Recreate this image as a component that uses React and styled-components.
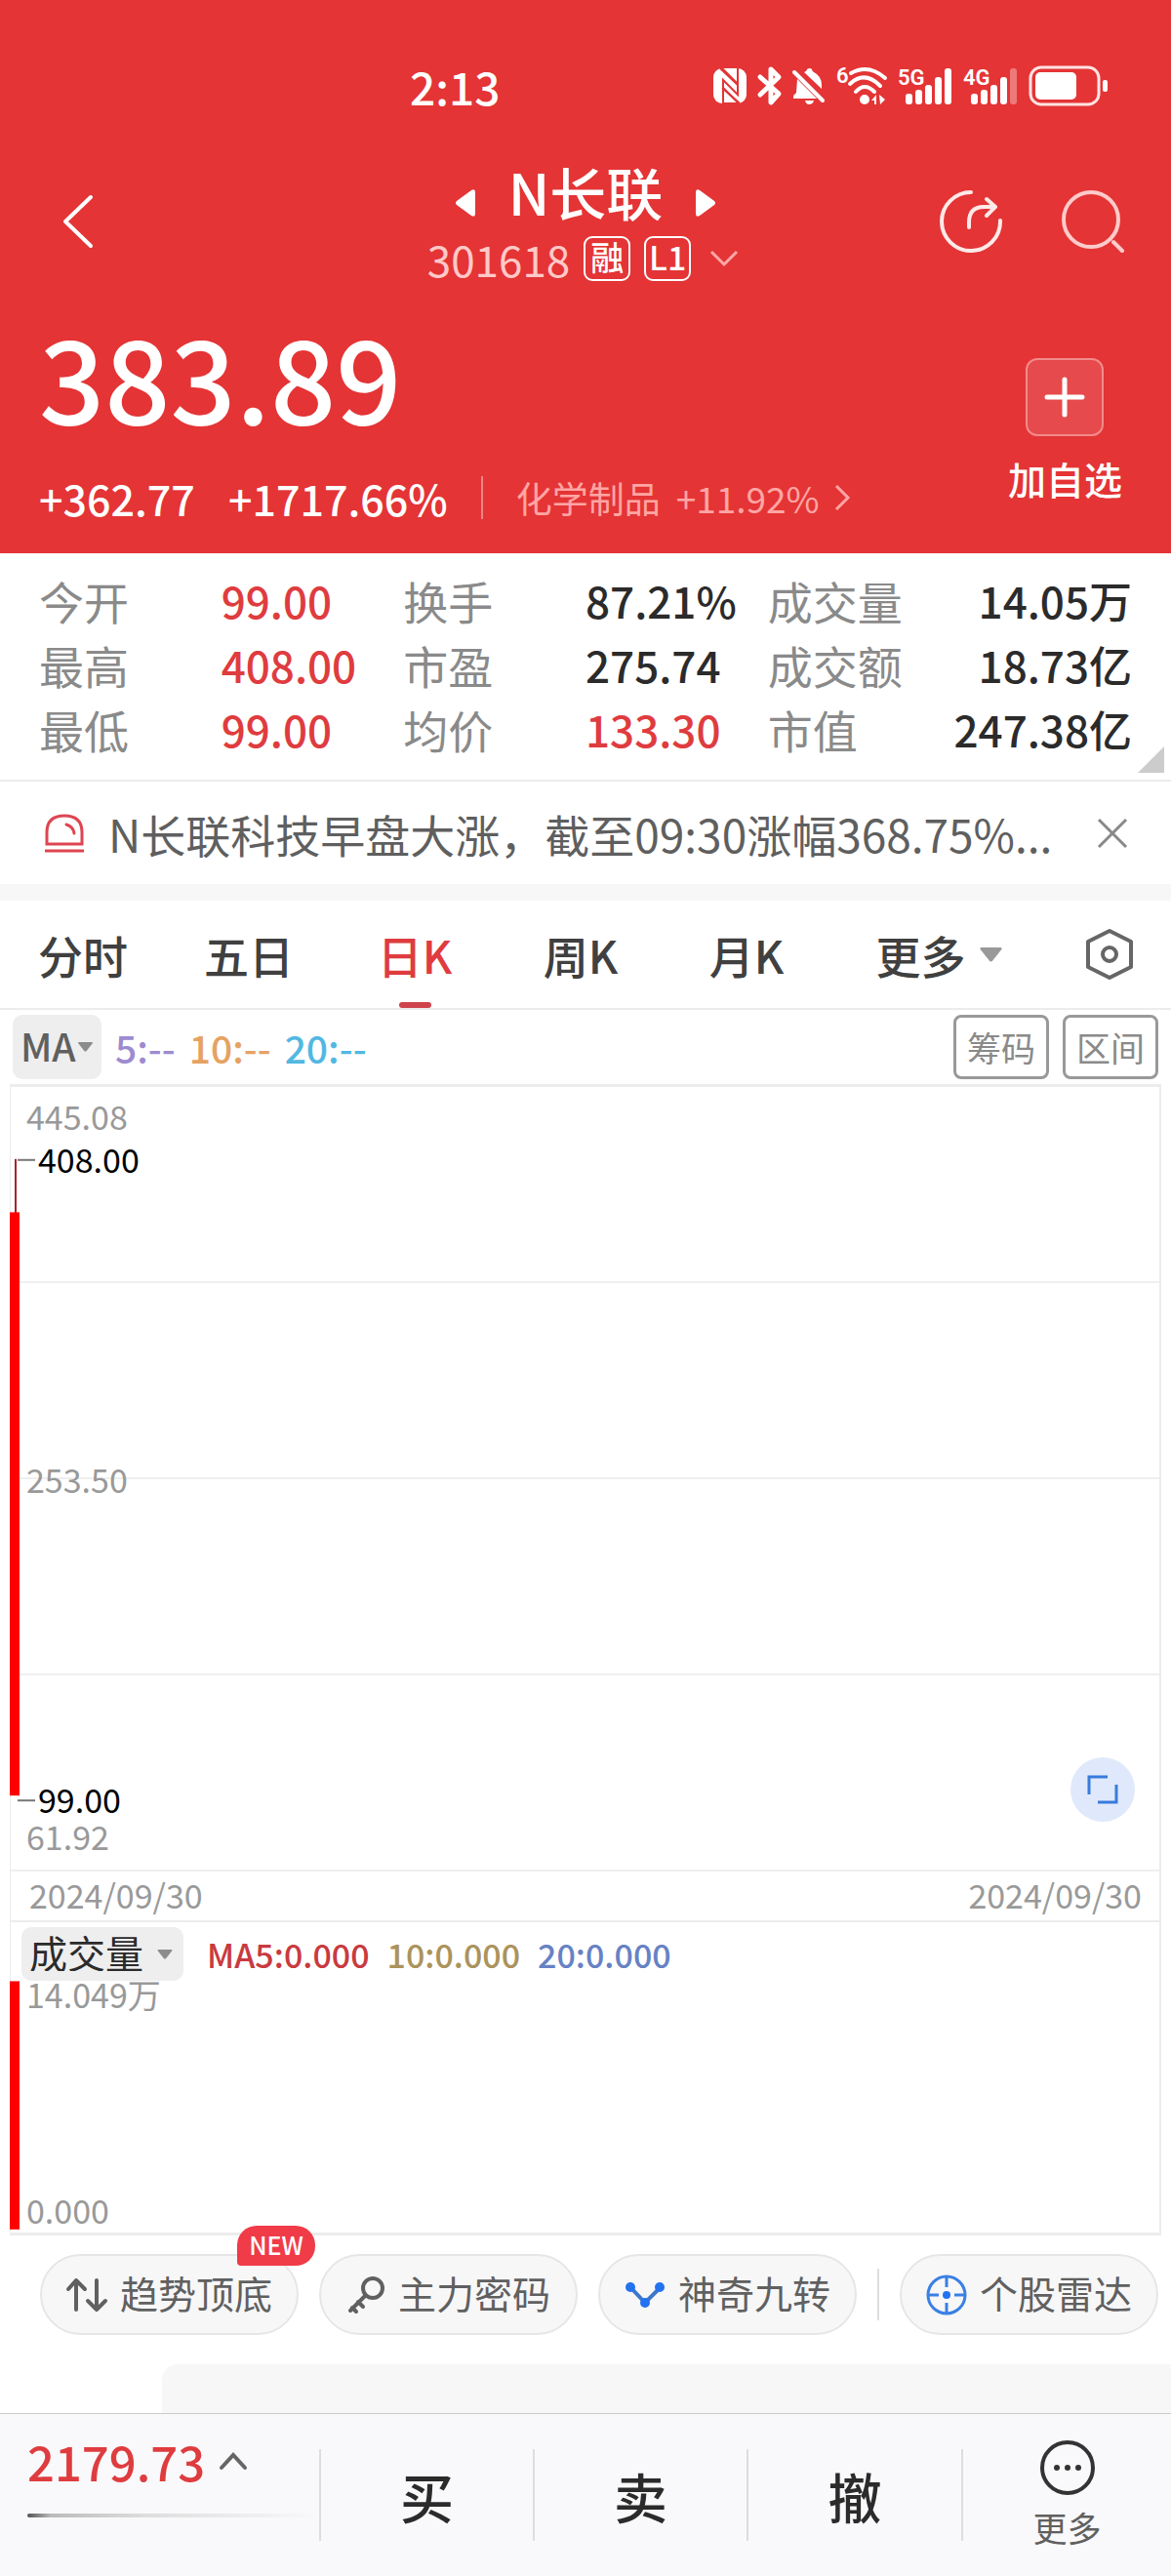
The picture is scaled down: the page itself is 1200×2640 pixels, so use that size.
import { useState } from 'react'
import styled, { createGlobalStyle } from 'styled-components'

const colors = {
  brand: '#e43435',
  rise: '#df3c3f',
  text: '#2b2b2b',
  muted: '#8a8a8a',
  axis: '#999',
  line: '#ececec',
  panel: '#f7f7f8',
}

const sizes = {
  price: '118px',
  title: '58px',
  action: '55px',
  total: '49px',
  body: '46px',
  figure: '44px',
  label: '39px',
  sector: '37px',
  small: '35px',
  chart: '34px',
  tiny: '25px',
}

const GlobalStyle = createGlobalStyle`
  * {
    box-sizing: border-box;
  }

  body {
    margin: 0;
    background: #fff;
    color: ${colors.text};
    font-family: 'Noto Sans CJK SC', 'Noto Sans', sans-serif;
    font-weight: 400;
  }

  button,
  select {
    margin: 0;
    padding: 0;
    border: 0;
    background: none;
    color: inherit;
    font: inherit;
    cursor: pointer;
  }

  svg {
    display: block;
    flex: none;
    overflow: visible;
  }
`

const Page = styled.div`
  min-height: 100vh;
  display: flex;
  flex-direction: column;
`

/* Header */

const Header = styled.header`
  background: ${colors.brand};
  color: #fff;
`

const StatusBar = styled.div`
  display: flex;
  align-items: center;
  justify-content: space-between;
  padding: 56px 65px 0 35%;
`

const Clock = styled.time`
  font-size: ${sizes.body};
  font-weight: 500;
  line-height: 64px;
`

const StatusIcons = styled.div`
  display: flex;
  align-items: center;
  gap: 11px;

  text {
    font-family: Roboto, sans-serif;
    font-weight: 600;
    font-size: 22px;
  }
`

const TitleBar = styled.div`
  display: grid;
  grid-template-columns: 1fr auto 1fr;
  align-items: center;
  padding: 40px 48px 0;
`

const TitleSide = styled.div`
  display: flex;
  justify-content: ${props => (props.$end ? 'flex-end' : 'flex-start')};
  gap: 61px;
  padding-left: 16px;
`

const TitleBlock = styled.div`
  display: flex;
  flex-direction: column;
  align-items: center;
  gap: 10px;
  padding: 0 0 6px;
`

const TitleRow = styled.div`
  display: flex;
  align-items: center;
  gap: 34px;
`

const StepButton = styled.button`
  padding-top: 24px;
`

const Title = styled.h1`
  margin: 0;
  font-size: ${sizes.title};
  font-weight: 500;
  line-height: 72px;
`

const CodeRow = styled.div`
  display: flex;
  align-items: center;
  gap: 14px;
  height: 46px;
`

const Code = styled.span`
  color: #ffc9c8;
  font-size: ${sizes.figure};
  line-height: 40px;
`

const Badge = styled.span`
  width: 48px;
  height: 46px;
  border: 2px solid #fff;
  border-radius: 9px;
  font-size: ${sizes.chart};
  font-weight: 500;
  line-height: 38px;
  text-align: center;
`

const Quote = styled.section`
  display: flex;
  justify-content: space-between;
  align-items: flex-start;
  padding: 30px 50px 27px 40px;
`

const Price = styled.div`
  font-size: ${sizes.price};
  font-weight: 500;
  line-height: 120px;
`

const ChangeRow = styled.div`
  display: flex;
  align-items: center;
  gap: 34px;
  margin-top: 36px;
  font-size: 43px;
  font-weight: 500;
  line-height: 60px;
`

const Divider = styled.span`
  width: 2px;
  height: ${props => props.$height};
  background: ${props => props.color};
`

const Sector = styled.a`
  display: flex;
  align-items: center;
  gap: 16px;
  color: #ffa5a4;
  font-size: ${sizes.sector};
  font-weight: 400;
  text-decoration: none;
`

const AddButton = styled.button`
  display: flex;
  flex-direction: column;
  align-items: center;
  gap: 19px;
  margin-top: 43px;
  font-size: ${sizes.label};
  font-weight: 500;
  line-height: 48px;
`

const AddIcon = styled.span`
  display: grid;
  place-items: center;
  width: 80px;
  height: 80px;
  border: 2px solid #f28b8b;
  border-radius: 12px;
  background: #e64a4c;
`

/* Figures */

const Stats = styled.dl`
  position: relative;
  display: grid;
  grid-template-columns: repeat(3, 1fr);
  margin: 0;
  padding: 15px 40px 19px;
  border-bottom: 2px solid ${colors.line};
  line-height: 66px;
`

const Stat = styled.div`
  display: flex;
`

const StatName = styled.dt`
  flex: ${props => (props.$wide ? '0 0 auto' : '0 0 50%')};
  color: ${colors.muted};
  font-size: ${sizes.body};
`

const StatValue = styled.dd`
  flex: 1;
  margin: 0;
  color: ${props => (props.$rise ? colors.rise : colors.text)};
  font-size: ${sizes.figure};
  font-weight: 500;
  text-align: ${props => (props.$wide ? 'right' : 'left')};
  white-space: nowrap;
`

const Corner = styled.span`
  position: absolute;
  right: 7px;
  bottom: 7px;
  border-left: 27px solid transparent;
  border-bottom: 27px solid #ccc;
`

const Notice = styled.div`
  display: flex;
  align-items: center;
  padding: 0 44px 0 45px;
  height: 105px;
`

const NoticeText = styled.p`
  flex: 1;
  margin: 0 40px 0 24px;
  overflow: hidden;
  color: #5f5f5f;
  font-size: ${sizes.body};
  line-height: 66px;
  text-overflow: ellipsis;
  white-space: nowrap;
`

const Band = styled.div`
  height: 17px;
  background: ${colors.panel};
`

/* Chart */

const Tabs = styled.div`
  display: grid;
  grid-template-columns: repeat(5, 170fr) 224fr 126fr;
  height: 112px;
  border-bottom: 2px solid ${colors.line};
`

const Tab = styled.button`
  display: flex;
  align-items: center;
  justify-content: center;
  gap: 14px;
  position: relative;
  color: ${props => (props.$active ? colors.rise : '#404040')};
  font-size: ${sizes.body};
  font-weight: 500;

  &::after {
    content: '';
    display: ${props => (props.$active ? 'block' : 'none')};
    position: absolute;
    bottom: 0;
    width: 33px;
    height: 6px;
    border-radius: 3px;
    background: #cf444c;
  }
`

const Toolbar = styled.div`
  display: flex;
  align-items: center;
  gap: 14px;
  padding: 5px 13px;
`

const Picker = styled.label`
  position: relative;
  display: flex;
  align-items: center;

  svg {
    position: absolute;
    right: ${props => (props.$large ? '11px' : '9px')};
    pointer-events: none;
  }

  select {
    appearance: none;
    height: ${props => (props.$large ? '55px' : '66px')};
    padding: ${props => (props.$large ? '0 40px 4px 8px' : '0 26px 3px 8px')};
    border-radius: 10px;
    background: #eee;
    color: ${props => (props.$large ? colors.text : '#606060')};
    font-size: ${sizes.label};
    font-weight: ${props => (props.$large ? 400 : 500)};
    line-height: 1;
  }
`

const Averages = styled.div`
  display: flex;
  flex: 1;
  gap: ${props => props.$gap};
  font-size: ${props => props.$size};
  font-weight: 500;
  line-height: 50px;
`

const Average = styled.span`
  color: ${props => props.color};
`

const ToolButton = styled.button`
  width: 98px;
  height: 66px;
  border: 3px solid #999;
  border-radius: 8px;
  color: ${colors.muted};
  font-size: ${sizes.small};
  line-height: 56px;
`

const ChartFrame = styled.section`
  margin: 0 10px;
  border: 1px solid ${colors.line};
  border-width: 3px 2px 3px 1px;
  color: ${colors.axis};
`

const Plot = styled.div`
  position: relative;
  display: grid;
  grid-template-rows: repeat(4, 1fr);
  height: 804px;
`

const GridBand = styled.div`
  border-bottom: 2px solid #efefef;
`

const AxisLabel = styled.span`
  position: absolute;
  left: ${props => (props.$mark ? '28px' : '16px')};
  color: ${props => (props.$mark ? '#000' : 'inherit')};
  font-size: ${sizes.chart};
  line-height: 36px;
  transform: translateY(-50%);
`

const Candle = styled.svg`
  position: absolute;
  left: -1px;
  top: 0;
  width: 28px;
  height: 100%;
`

const ExpandButton = styled.button`
  position: absolute;
  right: 25px;
  bottom: 51px;
  display: grid;
  place-items: center;
  width: 66px;
  height: 66px;
  border-radius: 50%;
  background: #dfe9fb;
`

const DateRow = styled.div`
  display: flex;
  justify-content: space-between;
  padding: 0 18px 2px 19px;
  border-bottom: 2px solid ${colors.line};
  font-size: ${sizes.chart};
  line-height: 48px;
`

const Volume = styled.div`
  position: relative;
  height: 318px;
  padding: 5px 11px;
`

const VolumeHead = styled.div`
  display: flex;
  align-items: center;
  gap: 24px;
`

/* Shortcuts */

const Chips = styled.nav`
  display: flex;
  align-items: center;
  justify-content: space-between;
  padding: 19px 13px 30px 41px;
`

const Chip = styled.button`
  position: relative;
  display: flex;
  align-items: center;
  justify-content: center;
  gap: 13px;
  width: 265px;
  height: 83px;
  border: 2px solid #e6e6e6;
  border-radius: 42px;
  background: ${colors.panel};
  color: #606060;
  font-size: ${sizes.label};
  line-height: 1;
`

const ChipText = styled.span`
  padding-bottom: 5px;
`

const NewTag = styled.span`
  position: absolute;
  top: -31px;
  right: -19px;
  width: 80px;
  height: 41px;
  border-radius: 20px 20px 20px 4px;
  background: #f03b48;
  color: #fff;
  font-size: ${sizes.tiny};
  font-weight: 500;
  line-height: 38px;
  text-align: center;
`

const NextPanel = styled.div`
  flex: 1;
  min-height: 50px;
  margin-left: 166px;
  border-radius: 16px 0 0 0;
  background: ${colors.panel};
`

/* Trade bar */

const TradeBar = styled.footer`
  display: grid;
  grid-template-columns: 327fr 219fr 219fr 220fr 215fr;
  align-items: center;
  height: 167px;
  border-top: 1px solid #ccc;
  background: #f9f9fb;
`

const Total = styled.button`
  display: flex;
  flex-direction: column;
  align-self: start;
  gap: 24px;
  padding: 18px 0 0 28px;
`

const TotalValue = styled.span`
  display: flex;
  align-items: center;
  gap: 15px;
  color: ${colors.rise};
  font-size: ${sizes.total};
  font-weight: 500;
  line-height: 60px;
`

const TotalTrack = styled.span`
  width: 100%;
  height: 4px;
  border-radius: 2px;
  background: linear-gradient(90deg, #555, #bbb 8%, #ddd 40%, #f9f9fb);
`

const Action = styled.button`
  height: 94px;
  border-left: 2px solid #ddd;
  font-size: ${sizes.action};
  font-weight: 500;
  line-height: 86px;
`

const MoreAction = styled.button`
  display: flex;
  flex-direction: column;
  align-items: center;
  justify-content: center;
  gap: 10px;
  height: 94px;
  border-left: 2px solid #ddd;
  color: #606060;
  font-size: ${sizes.small};
  line-height: 46px;
`

const Caret = ({ width = 15, height = 10, color = '#8c8c8c' }) => (
  <svg width={width} height={height} viewBox="0 0 15 10">
    <path d="M0 1Q0 0 1 0H14Q15 0 15 1L8.500 9.200Q7.500 10 6.500 9.200Z" fill={color} />
  </svg>
)

const Signal = ({ label, bars }) => (
  <svg width="56" height="40" viewBox="0 0 56 40" fill="#fff">
    <text x="0" y="19">{label}</text>
    {[28, 24, 19, 11, 2].map((top, i) => (
      <rect
        key={top}
        x={8 + i * 10}
        y={top}
        width="7"
        height={39 - top}
        rx="3"
        opacity={i < bars ? 1 : 0.35}
      />
    ))}
  </svg>
)

const Status = () => (
  <StatusIcons>
    <svg width="36" height="38" viewBox="0 0 36 38">
      <rect x="1" y="1" width="34" height="36" rx="9" fill="#fff" />
      <path d="M8 1L26 18V28L11 13V37M28 37L10 21M26 1V15" fill="none" stroke={colors.brand} strokeWidth="2" />
      <path d="M10 1L26 17V1M11 21V37H27Z" fill="none" stroke={colors.brand} strokeWidth="2" />
    </svg>
    <svg width="24" height="38" viewBox="0 0 24 38" fill="none" stroke="#fff" strokeWidth="5" strokeLinecap="round" strokeLinejoin="round">
      <path d="M2 10L21 27L13 36V2L21 10L2 28" />
    </svg>
    <svg width="34" height="38" viewBox="0 0 34 38" fill="#fff">
      <path d="M5 12L25 32H1V29L4 26Z" />
      <path d="M12 5Q15 4 15 2Q18 0 20 2Q20 4 22 5Q30 9 30 18V22Z" />
      <path d="M13 34H22Q21 38 17 38Q14 38 13 34Z" />
      <path d="M2 5L31 34" stroke="#fff" strokeWidth="4" strokeLinecap="round" />
    </svg>
    <svg width="52" height="40" viewBox="0 0 52 40" fill="#fff">
      <text x="0" y="17">6</text>
      <g fill="none" stroke="#fff" strokeWidth="4" strokeLinecap="round">
        <path d="M15 7Q33-3 50 12" />
        <path d="M14 18Q29 4 45 20" />
        <path d="M20 26Q29 16 39 26" />
      </g>
      <circle cx="29" cy="34" r="5" />
      <path d="M36 35L41 29V39H39V35ZM44 29L50 34L45 39Z" />
    </svg>
    <Signal label="5G" bars={5} />
    <Signal label="4G" bars={4} />
    <svg width="81" height="42" viewBox="0 0 81 42" fill="#fff">
      <rect x="2" y="2" width="70" height="38" rx="11" fill="none" stroke="#ffe3e3" strokeWidth="3" />
      <rect x="7" y="7" width="42" height="28" rx="5" />
      <rect x="76" y="15" width="5" height="12" rx="2" />
    </svg>
  </StatusIcons>
)

const TrendIcon = () => (
  <svg width="42" height="34" viewBox="0 0 42 34" fill="none" stroke="#606060" strokeWidth="4" strokeLinecap="round" strokeLinejoin="round">
    <path d="M10 32V2M2 11L10 2L19 11M31 2V32M22 23L31 32L40 23" />
  </svg>
)

const KeyIcon = () => (
  <svg width="40" height="40" viewBox="0 0 40 40" fill="none" stroke="#606060" strokeWidth="4" strokeLinecap="round">
    <circle cx="27" cy="13" r="10" />
    <path d="M19 21L4 36M6 33L10 37M12 27L17 32" />
  </svg>
)

const TurnIcon = () => (
  <svg width="42" height="30" viewBox="0 0 42 30" fill="#2372f0">
    <path d="M6 7L21 23L37 7" fill="none" stroke="#3d78c8" strokeWidth="4" />
    <circle cx="6" cy="7" r="5" />
    <circle cx="21" cy="23" r="5" />
    <circle cx="36" cy="7" r="5" />
  </svg>
)

const RadarIcon = () => (
  <svg width="42" height="42" viewBox="0 0 42 42" fill="none" stroke="#3a80e4" strokeWidth="3">
    <circle cx="21" cy="21" r="19" />
    <path d="M21 2V13M21 29V40M2 21H13M29 21H40" />
    <circle cx="21" cy="21" r="4" fill="#2372f0" stroke="none" />
  </svg>
)

const stats = [
  { name: '今开', value: '99.00', rise: true },
  { name: '换手', value: '87.21%' },
  { name: '成交量', value: '14.05万' },
  { name: '最高', value: '408.00', rise: true },
  { name: '市盈', value: '275.74' },
  { name: '成交额', value: '18.73亿' },
  { name: '最低', value: '99.00', rise: true },
  { name: '均价', value: '133.30', rise: true },
  { name: '市值', value: '247.38亿' },
]

const periods = ['分时', '五日', '日K', '周K', '月K']

const axis = { max: 445.08, mid: 253.5, min: 61.92 }
const day = { high: 408, close: 383.89, low: 99 }

const percent = value => ((axis.max - value) / (axis.max - axis.min)) * 100

function PriceChart() {
  const top = percent(day.close)
  const bottom = percent(day.low)
  // the high and low marks sit just outside the candle
  const highMark = `${percent(day.high) - 0.5}%`
  const lowMark = `${bottom + 0.5}%`

  return (
    <Plot>
      <GridBand />
      <GridBand />
      <GridBand />
      <GridBand />
      <AxisLabel style={{ top: 30 }}>{axis.max}</AxisLabel>
      <AxisLabel style={{ top: '50%' }}>{axis.mid.toFixed(2)}</AxisLabel>
      <AxisLabel style={{ top: 'calc(100% - 36px)' }}>{axis.min}</AxisLabel>
      <AxisLabel $mark style={{ top: highMark }}>
        {day.high.toFixed(2)}
      </AxisLabel>
      <AxisLabel $mark style={{ top: lowMark }}>
        {day.low.toFixed(2)}
      </AxisLabel>
      <Candle>
        <rect x="5" y={highMark} width="2" height="10%" fill="#a8232b" />
        <rect x="0" y={`${top}%`} width="10" height={`${bottom - top}%`} fill="#f00" />
        <rect x="8" y={highMark} width="18" height="2" fill="#777" />
        <rect x="8" y={lowMark} width="18" height="2" fill="#777" />
      </Candle>
      <ExpandButton aria-label="全屏">
        <svg width="32" height="32" viewBox="0 0 32 32" fill="none" stroke="#3a7bdc" strokeWidth="3">
          <path d="M2 21V3H21M11 29H30V11" />
        </svg>
      </ExpandButton>
    </Plot>
  )
}

function VolumeChart() {
  return (
    <Volume>
      <VolumeHead>
        <Picker $large>
          <select aria-label="副图指标">
            <option>成交量</option>
          </select>
          <Caret width={16} />
        </Picker>
        <Averages $size={sizes.chart} $gap="18px">
          <Average color="#c93a40">MA5:0.000</Average>
          <Average color="#ab935c">10:0.000</Average>
          <Average color="#6782c4">20:0.000</Average>
        </Averages>
      </VolumeHead>
      <AxisLabel style={{ top: 74 }}>14.049万</AxisLabel>
      <AxisLabel style={{ top: 'calc(100% - 23px)' }}>0.000</AxisLabel>
      <Candle>
        <rect x="0" y="19%" width="10" height="80%" fill="#f00" />
      </Candle>
    </Volume>
  )
}

export default function App() {
  const [period, setPeriod] = useState('日K')

  return (
    <Page>
      <GlobalStyle />

      <Header>
        <StatusBar>
          <Clock>2:13</Clock>
          <Status />
        </StatusBar>

        <TitleBar>
          <TitleSide>
            <button aria-label="返回">
              <svg width="32" height="54" viewBox="0 0 32 54" fill="none" stroke="#fff" strokeWidth="4" strokeLinecap="round" strokeLinejoin="round">
                <path d="M29 2L3 27L29 52" />
              </svg>
            </button>
          </TitleSide>
          <TitleBlock>
            <TitleRow>
              <StepButton aria-label="上一只">
                <svg width="20" height="28" viewBox="0 0 20 28" fill="#fff">
                  <path d="M1 12L16 1Q20-1 20 3V25Q20 29 16 27L1 16Q-1 14 1 12Z" />
                </svg>
              </StepButton>
              <Title>N长联</Title>
              <StepButton aria-label="下一只">
                <svg width="20" height="28" viewBox="0 0 20 28" fill="#fff">
                  <path d="M19 12L4 1Q0-1 0 3V25Q0 29 4 27L19 16Q21 14 19 12Z" />
                </svg>
              </StepButton>
            </TitleRow>
            <CodeRow>
              <Code>301618</Code>
              <Badge>融</Badge>
              <Badge>L1</Badge>
              <button aria-label="展开">
                <svg width="40" height="18" viewBox="0 0 40 18" fill="none" stroke="#ffa9a8" strokeWidth="3">
                  <path d="M7 2L20 15L33 2" />
                </svg>
              </button>
            </CodeRow>
          </TitleBlock>
          <TitleSide $end>
            <button aria-label="分享">
              <svg width="64" height="66" viewBox="0 0 64 66" fill="none" stroke="#ffe9e9" strokeWidth="4" strokeLinecap="round" strokeLinejoin="round">
                <path d="M32 3A30 30 0 1 0 62 32" />
                <path d="M30 39V34Q30 18 45 18H57M48 10L57 18L48 27" />
              </svg>
            </button>
            <button aria-label="搜索">
              <svg width="64" height="66" viewBox="0 0 64 66" fill="none" stroke="#ffcaca" strokeWidth="4" strokeLinecap="round">
                <circle cx="30" cy="31" r="28" />
                <path d="M53 54L62 63" />
              </svg>
            </button>
          </TitleSide>
        </TitleBar>

        <Quote>
          <div>
            <Price>383.89</Price>
            <ChangeRow>
              <span>+362.77</span>
              <span>+1717.66%</span>
              <Divider $height="44px" color="#f08585" />
              <Sector href="#sector">
                <span>化学制品</span>
                <span>+11.92%</span>
                <svg width="15" height="28" viewBox="0 0 15 28" fill="none" stroke="#ffa5a4" strokeWidth="3">
                  <path d="M1 2L13 14L1 26" />
                </svg>
              </Sector>
            </ChangeRow>
          </div>
          <AddButton>
            <AddIcon>
              <svg width="40" height="40" viewBox="0 0 40 40" stroke="#fff" strokeWidth="5" strokeLinecap="round">
                <path d="M20 2V38M2 20H38" />
              </svg>
            </AddIcon>
            加自选
          </AddButton>
        </Quote>
      </Header>

      <Stats>
        {stats.map(({ name, value, rise }, i) => (
          <Stat key={name}>
            <StatName $wide={i % 3 === 2}>{name}</StatName>
            <StatValue $wide={i % 3 === 2} $rise={rise}>
              {value}
            </StatValue>
          </Stat>
        ))}
        <Corner />
      </Stats>

      <Notice>
        <svg width="42" height="40" viewBox="0 0 42 40" fill="none" stroke="#dd4650" strokeWidth="3">
          <path d="M3 31V19Q3 2 21 2Q39 2 39 19V31Z" />
          <path d="M23 11Q30 13 31 20" strokeLinecap="round" />
          <path d="M1 38H41" />
        </svg>
        <NoticeText>N长联科技早盘大涨，截至09:30涨幅368.75%...</NoticeText>
        <button aria-label="关闭">
          <svg width="32" height="32" viewBox="0 0 32 32" stroke="#888" strokeWidth="3">
            <path d="M2 2L30 30M30 2L2 30" />
          </svg>
        </button>
      </Notice>
      <Band />

      <Tabs>
        {periods.map(name => (
          <Tab key={name} $active={name === period} onClick={() => setPeriod(name)}>
            {name}
          </Tab>
        ))}
        <Tab>
          更多
          <Caret width={23} height={15} color="#999" />
        </Tab>
        <Tab aria-label="设置">
          <svg width="52" height="54" viewBox="0 0 52 54" fill="none" stroke="#666" strokeWidth="4" strokeLinejoin="round">
            <path d="M26 3L48 14V40L26 51L4 40V14Z" />
            <circle cx="26" cy="27" r="7" />
          </svg>
        </Tab>
      </Tabs>

      <Toolbar>
        <Picker>
          <select aria-label="主图指标">
            <option>MA</option>
          </select>
          <Caret />
        </Picker>
        <Averages $size={sizes.label} $gap="14px">
          <Average color="#9d8bd0">5:--</Average>
          <Average color="#e6a262">10:--</Average>
          <Average color="#52b8e2">20:--</Average>
        </Averages>
        <ToolButton>筹码</ToolButton>
        <ToolButton>区间</ToolButton>
      </Toolbar>

      <ChartFrame>
        <PriceChart />
        <DateRow>
          <span>2024/09/30</span>
          <span>2024/09/30</span>
        </DateRow>
        <VolumeChart />
      </ChartFrame>

      <Chips>
        <Chip>
          <TrendIcon />
          <ChipText>趋势顶底</ChipText>
          <NewTag>NEW</NewTag>
        </Chip>
        <Chip>
          <KeyIcon />
          <ChipText>主力密码</ChipText>
        </Chip>
        <Chip>
          <TurnIcon />
          <ChipText>神奇九转</ChipText>
        </Chip>
        <Divider $height="53px" color="#ddd" />
        <Chip>
          <RadarIcon />
          <ChipText>个股雷达</ChipText>
        </Chip>
      </Chips>
      <NextPanel />

      <TradeBar>
        <Total>
          <TotalValue>
            2179.73
            <svg width="28" height="18" viewBox="0 0 28 18" fill="none" stroke="#666" strokeWidth="4" strokeLinecap="round">
              <path d="M2 16L14 3L26 16" />
            </svg>
          </TotalValue>
          <TotalTrack />
        </Total>
        <Action>买</Action>
        <Action>卖</Action>
        <Action>撤</Action>
        <MoreAction>
          <svg width="56" height="56" viewBox="0 0 56 56" fill="#333">
            <circle cx="28" cy="28" r="26" fill="none" stroke="#333" strokeWidth="4" />
            <circle cx="17" cy="28" r="3" />
            <circle cx="28" cy="28" r="3" />
            <circle cx="39" cy="28" r="3" />
          </svg>
          更多
        </MoreAction>
      </TradeBar>
    </Page>
  )
}
